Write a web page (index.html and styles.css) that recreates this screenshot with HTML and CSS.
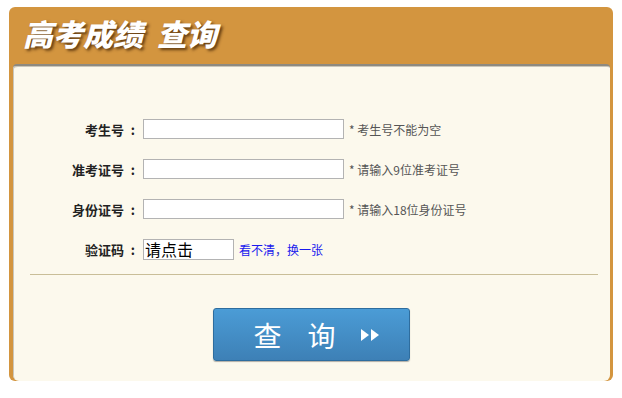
FILE: index.html
```html
<!DOCTYPE html>
<html lang="zh-CN">
<head>
    <meta charset="UTF-8">
    <title>高考成绩查询</title>
    <link rel="stylesheet" href="styles.css">
</head>
<body>
    <div class="box">
        <div class="box-head">
            <h1><span>高考成绩</span><span>查询</span></h1>
        </div>
        <div class="box-body">
            <form class="query-form">
                <div class="row">
                    <label for="ksh">考生号<span class="colon">:</span></label>
                    <input type="text" id="ksh" class="text-input">
                    <span class="hint">* 考生号不能为空</span>
                </div>
                <div class="row">
                    <label for="zkzh">准考证号<span class="colon">:</span></label>
                    <input type="text" id="zkzh" class="text-input">
                    <span class="hint">* 请输入9位准考证号</span>
                </div>
                <div class="row">
                    <label for="sfzh">身份证号<span class="colon">:</span></label>
                    <input type="text" id="sfzh" class="text-input">
                    <span class="hint">* 请输入18位身份证号</span>
                </div>
                <div class="row">
                    <label>验证码<span class="colon">:</span></label>
                    <div class="captcha">请点击</div>
                    <span class="links"><a href="#">看不清</a>，<a href="#">换一张</a></span>
                </div>
                <div class="divider"></div>
                <div class="actions">
                    <button type="button" class="submit-btn">
                        <span>查</span><span>询</span>
                        <svg width="20" height="14" viewBox="0 0 20 14">
                            <polygon points="1,1 9,7 1,13" fill="#fff"/>
                            <polygon points="11,1 19,7 11,13" fill="#fff"/>
                        </svg>
                    </button>
                </div>
            </form>
        </div>
    </div>
</body>
</html>
```

FILE: styles.css
```css
body {
    margin: 0;
    padding: 7px 9px 0 9px;
    background-color: #fff;
    font-family: "Noto Sans CJK SC", sans-serif;
}
.box {
    width: 604px;
    height: 374px;
    background-color: #d3953f;
    border-radius: 6px;
    display: flex;
    flex-direction: column;
}
.box-head {
    height: 57px;
    display: flex;
    align-items: center;
    padding-left: 14px;
    box-sizing: border-box;
}
.box-head h1 {
    margin: -6px 0 0 0;
    font-size: 30px;
    font-weight: 900;
    font-style: italic;
    color: #fff;
    line-height: 1;
    text-shadow: 2px 2px 3px rgba(60, 30, 0, 0.75);
    display: flex;
    gap: 14px;
}
.box-body {
    flex: 1;
    margin: 0 3px 0 4px;
    background-color: #fcf9ed;
    border-top: 2px solid #8e8a80;
    border-radius: 4px 4px 6px 6px;
    box-shadow: inset 1px 1px 0 #c9c6bb;
}
.query-form {
    padding-top: 53px;
}
.row {
    display: flex;
    align-items: center;
    height: 20px;
    margin-bottom: 20px;
}
.row label {
    width: 124px;
    text-align: right;
    font-size: 13px;
    font-weight: bold;
    color: #222;
    margin-right: 6px;
}
.row .colon {
    display: inline-block;
    width: 13px;
    padding-right: 2px;
    box-sizing: border-box;
    text-align: right;
}
.text-input {
    width: 201px;
    height: 20px;
    box-sizing: border-box;
    border: 1px solid #b3b3b3;
    background-color: #fff;
    padding: 0 3px;
    margin: 0;
}
.hint {
    margin-left: 5px;
    font-size: 12px;
    color: #555;
}
.captcha {
    width: 91px;
    height: 21px;
    box-sizing: border-box;
    border: 1px solid #b3b3b3;
    background-color: #fff;
    font-size: 16px;
    line-height: 19px;
    color: #000;
    padding-left: 1px;
}
.links {
    margin-left: 5px;
    font-size: 12px;
    color: #3030d0;
}
.links a {
    color: #1a1aee;
    text-decoration: none;
}
.divider {
    margin: -5px 12px 0 17px;
    height: 1px;
    background-color: #c9be98;
}
.actions {
    display: flex;
    justify-content: center;
    padding-top: 33px;
}
.submit-btn {
    width: 197px;
    height: 53px;
    border: 1px solid #2e6d9e;
    border-radius: 3px;
    background: linear-gradient(#4b9cd6, #3d80b6);
    box-shadow: 0 1px 1px rgba(0, 0, 0, 0.3);
    color: #fff;
    font-family: "Noto Sans CJK SC", sans-serif;
    font-size: 28px;
    display: flex;
    align-items: center;
    justify-content: center;
    gap: 26px;
    padding: 0 0 0 10px;
    cursor: pointer;
}
.submit-btn svg {
    margin-left: -2px;
}
```
